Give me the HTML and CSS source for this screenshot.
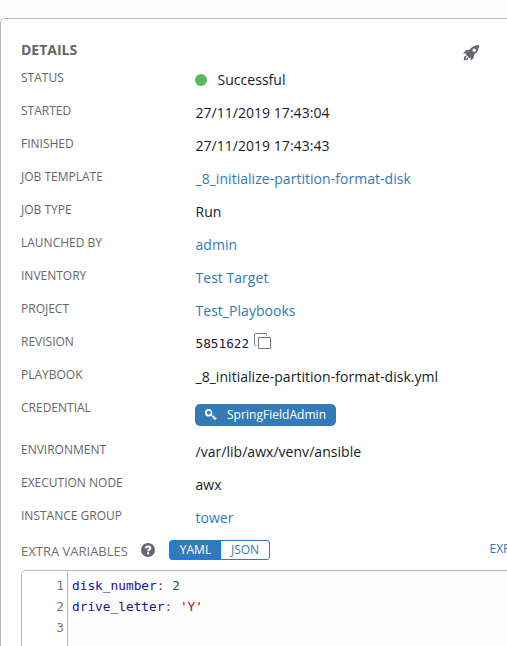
FILE: index.html
```html
<!DOCTYPE html>
<html lang="en">
<head>
<meta charset="utf-8">
<title>Job Details</title>
<link rel="stylesheet" href="styles.css">
</head>
<body>
<main class="panel">
  <header class="panel-header">
    <h1 class="title">DETAILS</h1>
    <svg class="rocket" viewBox="0 0 16 16" width="16" height="16" aria-hidden="true"><path fill-rule="evenodd" d="M16 0C11.800 0 8.900 1.400 6.200 4.900L2.900 5.300 0 8.700l3.400-.5-.7 1.300 3.700 3.700 1.500-.7-.4 3.500 3.100-3.100.5-3.200C14.600 7.200 16 4.200 16 0ZM11.200 3.500a1.700 1.700 0 1 1 0 3.400 1.700 1.700 0 0 1 0-3.400ZM2.500 10.400C1 11 .8 12.700.8 15.200c2.500 0 3.900-.3 4.600-1.800l-1-.8c-.3.900-.9 1.200-1.900 1.200 0-1 .3-1.600 1.100-2Z"/></svg>
  </header>
  <dl class="details">
    <div class="row"><dt>STATUS</dt><dd><span class="status-dot"></span>Successful</dd></div>
    <div class="row"><dt>STARTED</dt><dd>27/11/2019 17:43:04</dd></div>
    <div class="row"><dt>FINISHED</dt><dd>27/11/2019 17:43:43</dd></div>
    <div class="row"><dt>JOB TEMPLATE</dt><dd><a>_8_initialize-partition-format-disk</a></dd></div>
    <div class="row"><dt>JOB TYPE</dt><dd>Run</dd></div>
    <div class="row"><dt>LAUNCHED BY</dt><dd><a>admin</a></dd></div>
    <div class="row"><dt>INVENTORY</dt><dd><a>Test Target</a></dd></div>
    <div class="row"><dt>PROJECT</dt><dd><a>Test_Playbooks</a></dd></div>
    <div class="row"><dt>REVISION</dt><dd><span class="hash">5851622</span><svg class="copy" viewBox="0 0 17 17" width="17" height="17" aria-hidden="true"><path d="M4.500 4.500h12v11h-12zM2.500 12.500h-1q-1 0-1-1v-10q0-1 1-1h10q1 0 1 1v1"/></svg></dd></div>
    <div class="row"><dt>PLAYBOOK</dt><dd>_8_initialize-partition-format-disk.yml</dd></div>
    <div class="row row-credential"><dt>CREDENTIAL</dt><dd><span class="tag"><svg class="key" viewBox="0 0 12 12" width="12" height="12" aria-hidden="true"><path fill-rule="evenodd" d="M3.800 0a3.800 3.800 0 1 0 1.300 7.300L6 6.500l3.800 4.400 1.900-1.500-1-1.100-.9.700-.7-.8.800-.8-.9-.9-.8.700L6.900 5.500A3.800 3.800 0 0 0 3.800 0ZM3.800 1.800a1.900 1.900 0 1 1 0 3.800 1.900 1.900 0 0 1 0-3.800Z"/></svg>SpringFieldAdmin</span></dd></div>
    <div class="row"><dt>ENVIRONMENT</dt><dd>/var/lib/awx/venv/ansible</dd></div>
    <div class="row"><dt>EXECUTION NODE</dt><dd>awx</dd></div>
    <div class="row row-last"><dt>INSTANCE GROUP</dt><dd><a>tower</a></dd></div>
  </dl>
  <div class="vars-bar">
    <span class="vars-label">EXTRA VARIABLES</span>
    <svg class="help" viewBox="0 0 14 14" width="14" height="14" aria-hidden="true"><circle cx="7" cy="7" r="7"/><path d="M4.700 5.400Q4.900 3.500 7.100 3.500q2.200 0 2.200 1.700 0 1-1.200 1.600-1 .5-1 1.400M7.100 9.200v2"/></svg>
    <div class="toggle"><span class="option active">YAML</span><span class="option">JSON</span></div>
    <a class="expand">EXPAND</a>
  </div>
  <div class="editor">
    <div class="gutter"><span>1</span><span>2</span><span>3</span></div>
    <div class="code">
      <div><span class="atom">disk_number</span><span class="meta">:</span> <span class="number">2</span></div>
      <div><span class="atom">drive_letter</span><span class="meta">:</span> <span class="string">'Y'</span></div>
    </div>
  </div>
</main>
</body>
</html>
```
FILE: styles.css
```css
* { box-sizing: border-box; }
html { overflow: hidden; }
body {
  margin: 0;
  padding-top: 18px;
  height: 646px;
  overflow: hidden;
  background: #fcfcfc;
  font-family: "Open Sans", "Noto Sans", sans-serif;
  font-size: 14px;
  line-height: 20px;
  color: #161b1f;
}
.panel {
  width: 507px;
  height: 628px;
  padding: 20px 0 0 20px;
  border: 1px solid #b7b7b7;
  border-width: 1px 0 0 1px;
  border-radius: 5px 0 0 0;
  background: #fff;
  overflow: hidden;
}
.panel-header {
  display: flex;
  width: 458px;
  height: 29px;
  justify-content: space-between;
}
.title {
  margin: 1px 0 0;
  font-size: 14px;
  line-height: 20px;
  font-weight: 700;
  color: #666;
}
.rocket { margin-top: 6px; fill: #656872; }
.details { margin: 0; }
.row {
  display: flex;
  height: 33px;
}
.row-credential { height: 42px; }
.row-last { height: 25px; }
dt {
  width: 174.500px;
  padding-top: 1px;
  font-size: 12px;
  line-height: 18px;
  color: #666;
}
dd {
  display: flex;
  align-items: center;
  height: 20px;
  margin: 2px 0 0;
  white-space: nowrap;
  letter-spacing: 0.035px;
}
a { color: #337ab7; }
.status-dot {
  width: 12px;
  height: 12px;
  margin: 0 10.500px 0 -0.500px;
  border-radius: 50%;
  background: #5cb85c;
}
.hash {
  font-family: "DejaVu Sans Mono", monospace;
  font-size: 12.7px;
}
.copy {
  margin: -5px 0 0 4.700px;
  fill: none;
  stroke: #707580;
}
.tag {
  display: flex;
  align-items: center;
  width: 141px;
  height: 22px;
  margin: 9px 0 0 -0.500px;
  padding-left: 10px;
  border-radius: 5px;
  background: #337ab7;
  font-size: 12px;
  color: #fff;
}
.key { margin-right: 10px; fill: #fff; }
.vars-bar {
  display: flex;
  height: 39px;
  align-items: flex-start;
  font-size: 12px;
}
.vars-label {
  flex: none;
  width: 120px;
  padding-top: 10px;
  font-size: 13px;
  white-space: nowrap;
  color: #707070;
}
.help { flex: none; margin-top: 12px; fill: #656872; }
.help path { fill: none; stroke: #fff; stroke-width: 2; }
.toggle {
  display: flex;
  flex: none;
  width: 101px;
  height: 20px;
  margin: 9px 0 0 14px;
  border: 1px solid #337ab7;
  border-radius: 3px;
  overflow: hidden;
  line-height: 17px;
}
.option {
  flex: 1;
  text-align: center;
  color: #337ab7;
}
.option.active {
  flex: 0 0 51px;
  background: #337ab7;
  box-shadow: inset 0 0 0 1px #0b7ff0;
  color: #fff;
}
.expand { flex: none; margin: 8px 0 0 219.500px; }
.editor {
  display: flex;
  height: 77px;
  border: 1px solid #b7b7b7;
  border-width: 1px 0 0 1px;
  border-radius: 5px 0 0 0;
  background: #fcfcfc;
  font-family: "DejaVu Sans Mono", monospace;
  font-size: 12.8px;
  line-height: 21px;
  overflow: hidden;
}
.gutter {
  display: flex;
  flex-direction: column;
  width: 46px;
  padding: 4px 3px 0 0;
  border-right: 1px solid #b7b7b7;
  background: #fff;
  text-align: right;
  color: #707580;
}
.code {
  display: flex;
  flex-direction: column;
  padding: 4px 0 0 4px;
  white-space: pre;
}
.atom { color: #221199; }
.meta { color: #555; }
.number { color: #116644; }
.string { color: #aa1111; }
```
